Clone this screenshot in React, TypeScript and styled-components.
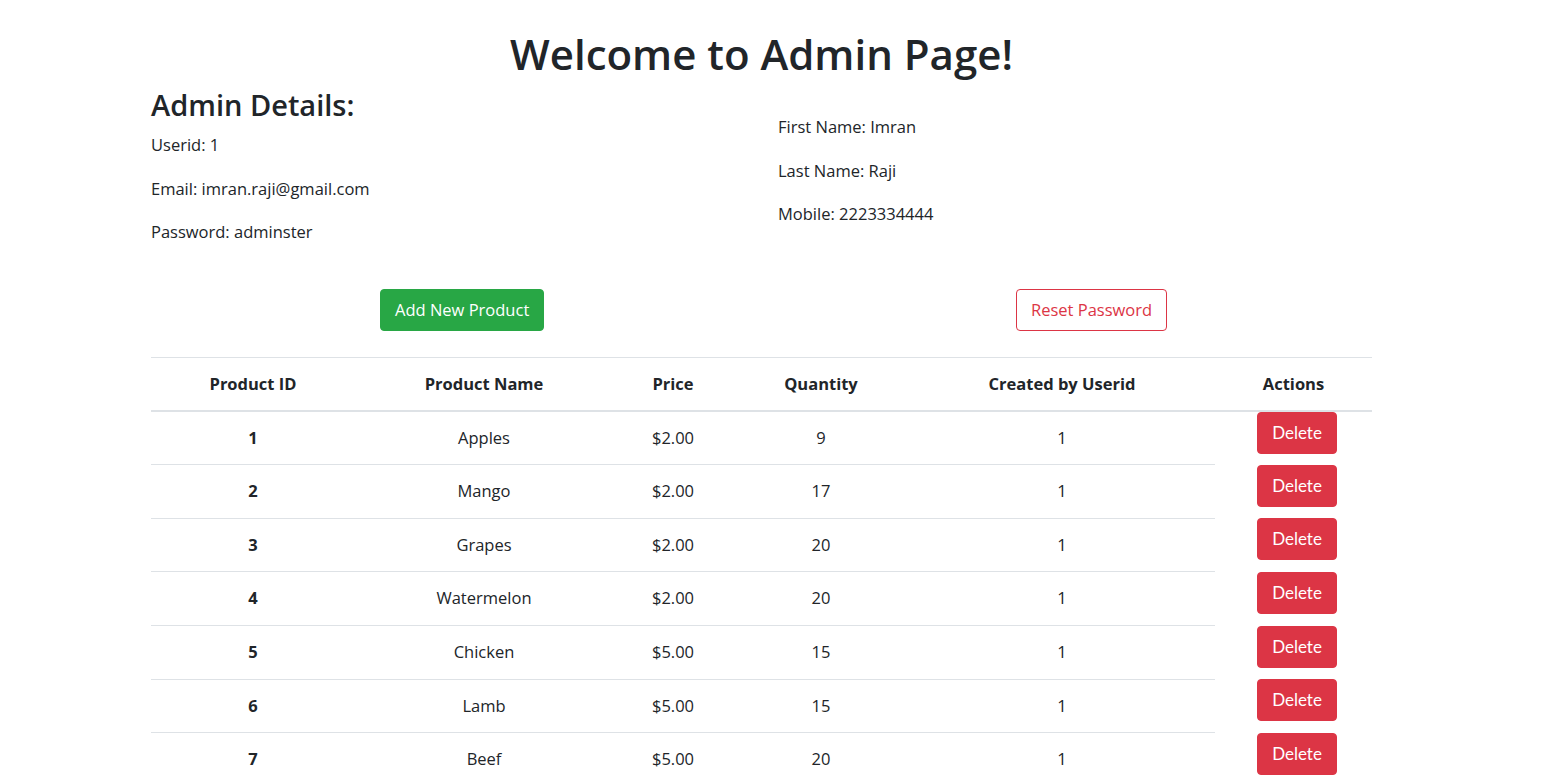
import React from "react";
import styled, { createGlobalStyle } from "styled-components";

const GlobalStyle = createGlobalStyle`
  html, body { margin: 0; padding: 0; overflow: hidden; background: #fff; }
  *, *::before, *::after { box-sizing: border-box; }
  body {
    font-family: "Open Sans", "Noto Sans", sans-serif;
    font-size: 16.5px;
    color: #212529;
  }
`;

const Container = styled.div`
  width: 1221px;
  margin-left: 151px;
`;

const Title = styled.h1`
  margin: 29px 0 0;
  font-size: 42px;
  font-weight: 600;
  line-height: 1.2;
  text-align: center;
`;

const DetailsRow = styled.div`
  display: grid;
  grid-template-columns: 627px 1fr;
  margin-top: 9px;
`;

const Column = styled.div<{ $offset?: number }>`
  padding-top: ${(p) => p.$offset ?? 0}px;
`;

const SubTitle = styled.h2`
  margin: 0 0 10px;
  font-size: 29px;
  font-weight: 600;
  line-height: 1.2;
`;

const Info = styled.p`
  margin: 0 0 19.5px;
  line-height: 24px;
`;

const ActionsRow = styled.div`
  display: grid;
  grid-template-columns: 610px 1fr;
  margin-top: 25px;
`;

const Btn = styled.button<{ $variant: "success" | "outline-danger"; $ml: number }>`
  justify-self: start;
  margin-left: ${(p) => p.$ml}px;
  font-family: inherit;
  font-size: 16.5px;
  line-height: 24px;
  padding: 8px 14px;
  border-radius: 4px;
  border: 1px solid ${(p) => (p.$variant === "success" ? "#28a745" : "#dc3545")};
  background: ${(p) => (p.$variant === "success" ? "#28a745" : "#fff")};
  color: ${(p) => (p.$variant === "success" ? "#fff" : "#dc3545")};
  cursor: pointer;
`;

const Table = styled.table`
  width: 1221px;
  margin-top: 26px;
  border-collapse: collapse;
  table-layout: fixed;
`;

const Th = styled.th<{ $w: number }>`
  width: ${(p) => p.$w}px;
  padding: 14px 12px;
  line-height: 24px;
  font-weight: 700;
  text-align: center;
  border-top: 1px solid #dee2e6;
  border-bottom: 2px solid #dee2e6;
`;

const Td = styled.td<{ $bold?: boolean }>`
  padding: 14px 12px;
  line-height: 24.6px;
  text-align: center;
  font-weight: ${(p) => (p.$bold ? 700 : 400)};
  border-top: 1px solid #dee2e6;
`;

const ActionTd = styled.td`
  padding: 0;
  vertical-align: top;
  text-align: center;
`;

const DeleteBtn = styled.button`
  margin-left: 7px;
  font-family: "Lato", sans-serif;
  font-size: 17px;
  line-height: 24px;
  padding: 8px 14px;
  border: 1px solid #dc3545;
  border-radius: 4px;
  background: #dc3545;
  color: #fff;
  cursor: pointer;
`;

const products = [
  { id: 1, name: "Apples", price: "$2.00", qty: 9, by: 1 },
  { id: 2, name: "Mango", price: "$2.00", qty: 17, by: 1 },
  { id: 3, name: "Grapes", price: "$2.00", qty: 20, by: 1 },
  { id: 4, name: "Watermelon", price: "$2.00", qty: 20, by: 1 },
  { id: 5, name: "Chicken", price: "$5.00", qty: 15, by: 1 },
  { id: 6, name: "Lamb", price: "$5.00", qty: 15, by: 1 },
  { id: 7, name: "Beef", price: "$5.00", qty: 20, by: 1 },
];

export default function App() {
  return (
    <>
      <GlobalStyle />
      <Container>
        <Title>Welcome to Admin Page!</Title>
        <DetailsRow>
          <Column>
            <SubTitle>Admin Details:</SubTitle>
            <Info>Userid: 1</Info>
            <Info>Email: imran.raji@gmail.com</Info>
            <Info>Password: adminster</Info>
          </Column>
          <Column $offset={27}>
            <Info>First Name: Imran</Info>
            <Info>Last Name: Raji</Info>
            <Info>Mobile: 2223334444</Info>
          </Column>
        </DetailsRow>
        <ActionsRow>
          <Btn $variant="success" $ml={229}>Add New Product</Btn>
          <Btn $variant="outline-danger" $ml={255}>Reset Password</Btn>
        </ActionsRow>
        <Table>
          <thead>
            <tr>
              <Th $w={204}>Product ID</Th>
              <Th $w={258}>Product Name</Th>
              <Th $w={120}>Price</Th>
              <Th $w={176}>Quantity</Th>
              <Th $w={306}>Created by Userid</Th>
              <Th $w={157}>Actions</Th>
            </tr>
          </thead>
          <tbody>
            {products.map((p) => (
              <tr key={p.id}>
                <Td $bold>{p.id}</Td>
                <Td>{p.name}</Td>
                <Td>{p.price}</Td>
                <Td>{p.qty}</Td>
                <Td>{p.by}</Td>
                <ActionTd>
                  <DeleteBtn>Delete</DeleteBtn>
                </ActionTd>
              </tr>
            ))}
          </tbody>
        </Table>
      </Container>
    </>
  );
}
